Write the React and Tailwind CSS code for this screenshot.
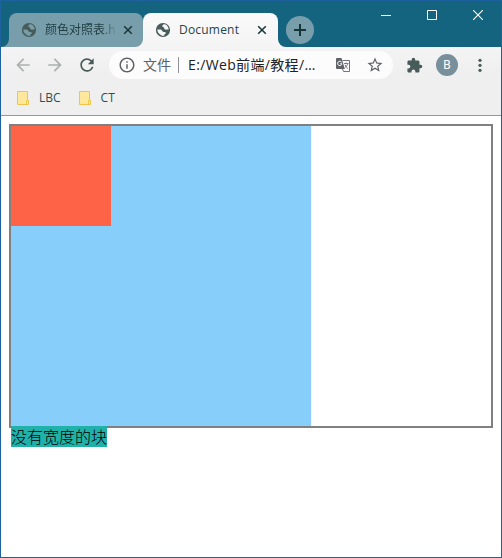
import React from "react";
import { MdArrowBack, MdArrowForward, MdRefresh, MdInfoOutline, MdStarBorder, MdExtension } from "react-icons/md";

function Globe() {
  return (
    <svg viewBox="0 0 16 16" className="h-4 w-4 shrink-0">
      <circle cx="8" cy="8" r="7.1" fill="currentColor" />
      <path
        d="M9.6 2.2C7.6 2.5 6.9 3.6 7.4 4.4C8 5.2 9.2 5 9.2 6C9.2 7.1 10.3 7.8 11.6 7.6L13.7 7.4C13.6 5.4 12.2 3.3 10.6 2.6ZM2.3 7.6C2.3 10 3.9 12.5 6.6 13.4C7.5 13.7 8.6 13.7 9.4 13.4L9.3 12.4C10.5 12.3 11.1 11.5 10.7 10.6C10.2 9.8 8.8 10.2 8 9.7C7 9 6.7 7.7 5.4 7.6Z"
        className="fill-(--land)"
      />
    </svg>
  );
}

function Cross() {
  return (
    <svg viewBox="0 0 10 10" className="h-[10px] w-[10px] shrink-0 text-[#1d3a3a]">
      <path d="M1.2 1.2 8.8 8.8 M8.8 1.2 1.2 8.8" stroke="currentColor" strokeWidth="1.6" fill="none" />
    </svg>
  );
}

function TranslateIcon() {
  return (
    <svg viewBox="0 0 16 16" className="h-4 w-4 shrink-0">
      <path d="M7.5 3.5H14.5V14.5H8.5L7 11" fill="none" stroke="#717478" />
      <path d="M2 1H6.5L9.8 12H2A1 1 0 0 1 1 11V2A1 1 0 0 1 2 1Z" fill="#5f6368" />
      <path d="M6.6 5.1A2.2 2.2 0 1 0 7 6.8H5" fill="none" stroke="#fcfcfc" strokeWidth="1" />
      <path d="M9 6.5H13.5M11.2 5.5V6.5M12.7 6.5C12.3 8.5 11.2 9.8 9.8 10.7M10 7.8C10.7 9.5 11.8 10.8 13 11.7" fill="none" stroke="#717478" strokeWidth=".9" />
    </svg>
  );
}

function TabStrip() {
  return (
    <header className="flex h-[45px] shrink-0 items-start bg-[#14647f]">
      <div className="flex h-full items-end">
        <svg viewBox="0 0 8 8" className="h-2 w-2"><path d="M8 0A8 8 0 0 1 0 8H8Z" fill="#789eab" /></svg>
        <div className="flex h-[34px] w-[134px] bg-[#f4f4f4]">
          <div className="flex w-full items-center rounded-t-lg rounded-br-lg bg-[#789eab] pl-3 text-[#475b58] [--land:#789eab] shadow-[0_-10px_0_0_#14647f]">
            <Globe />
            <span className="ml-2 w-[72px] whitespace-nowrap bg-linear-to-r from-[#203e43] from-80% to-[#789eab] bg-clip-text text-[12px] text-transparent">颜色对照表.h</span>
            <span className="ml-[6px] flex"><Cross /></span>
          </div>
        </div>
      </div>
      <div className="flex h-full items-end">
        <div className="flex h-[34px] w-[135px] items-center rounded-t-lg bg-linear-to-b from-[#fafafa] to-[#f4f4f4] pl-3 text-[#475b58] [--land:#f7f7f7]">
          <Globe />
          <span className="ml-2 w-[72px] text-[12px] tracking-[0.2px] text-[#244549]">Document</span>
          <span className="ml-[6px] flex"><Cross /></span>
        </div>
        <svg viewBox="0 0 8 8" className="h-2 w-2"><path d="M0 0A8 8 0 0 0 8 8H0Z" fill="#f4f4f4" /></svg>
      </div>
      <div className="mt-[14px] flex h-7 w-7 items-center justify-center rounded-full bg-[#789eab]">
        <svg viewBox="0 0 12 12" className="h-3 w-3"><path d="M6 0V12M0 6H12" stroke="#173436" strokeWidth="2" /></svg>
      </div>
      <div className="ml-auto mr-[18px] mt-2 flex gap-9">
        <svg viewBox="0 0 10 10" className="h-[10px] w-[10px]"><path d="M0 5.5H10" stroke="white" /></svg>
        <svg viewBox="0 0 10 10" className="h-[10px] w-[10px]"><path d="M.5 .5H9.5V9.5H.5Z" stroke="white" fill="none" /></svg>
        <svg viewBox="0 0 10 10" className="h-[10px] w-[10px]"><path d="M0 0 10 10M10 0 0 10" stroke="white" strokeWidth="1.1" /></svg>
      </div>
    </header>
  );
}

function AddressBar() {
  return (
    <div className="flex h-9 items-center text-[#475b58]">
      <MdArrowBack className="ml-3 h-5 w-5 text-[#aab1af]" />
      <MdArrowForward className="ml-3 h-5 w-5 text-[#aab1af]" />
      <MdRefresh className="ml-3 h-5 w-5" />
      <div className="ml-3 flex h-7 w-[284px] items-center rounded-full bg-[#fcfcfc] pl-[9px] text-[14px] text-[#5f6368]">
        <MdInfoOutline className="h-[18px] w-[18px]" />
        <span className="ml-[7px] w-7 -translate-y-px whitespace-nowrap">文件</span>
        <span className="ml-[7px] h-4 w-px bg-[#909395]" />
        <span className="ml-[9px] w-[134px] -translate-y-px whitespace-nowrap tracking-[0.35px] text-[#202124]">E:/Web前端/教程/…</span>
        <span className="ml-[13px] flex"><TranslateIcon /></span>
        <MdStarBorder className="ml-[15px] h-[18px] w-[18px]" />
      </div>
      <MdExtension className="ml-[13px] h-[17px] w-[17px]" />
      <div className="ml-[13px] flex h-[22px] w-[22px] items-center justify-center rounded-full bg-[#78909c] font-[Roboto] text-[12px] text-white">B</div>
      <svg viewBox="0 0 4 14" className="ml-5 h-[14px] w-1 fill-current">
        <circle cx="2" cy="2.3" r="1.6" />
        <circle cx="2" cy="7.3" r="1.6" />
        <circle cx="2" cy="12.3" r="1.6" />
      </svg>
    </div>
  );
}

function Bookmark({ children }) {
  return (
    <div className="flex items-center text-[12px] text-[#294f57]">
      <svg viewBox="0 0 13 14" className="h-[14px] w-[13px]">
        <path d="M.5 .5H10.5V9.5H11.5V13.5H.5Z" fill="#ffe79b" stroke="#edc64b" />
        <path d="M9.5 13V9.5H11.5V13" fill="#fff0b5" stroke="#edc64b" />
      </svg>
      <span className="ml-[9px]">{children}</span>
    </div>
  );
}

export default function App() {
  return (
    <div className="flex h-[558px] w-[502px] flex-col overflow-hidden border border-[#1d619e] bg-white font-['Open_Sans','Noto_Sans_CJK_SC',sans-serif]">
      <div className="h-px shrink-0 bg-[#175f8c]" />
      <TabStrip />
      <div className="h-[69px] shrink-0 border-b border-[#98989a] bg-linear-to-b from-[#f4f4f4] to-[#efefef] to-40%">
        <AddressBar />
        <nav className="flex h-[29px] items-center gap-[18px] pl-4">
          <Bookmark>LBC</Bookmark>
          <Bookmark>CT</Bookmark>
        </nav>
      </div>
      <main className="p-2">
        <section className="border-2 border-[#808080]">
          <div className="h-[300px] w-[300px] bg-[#87cefa]">
            <div className="h-[100px] w-[100px] bg-[#ff6347]" />
          </div>
        </section>
        <div className="relative ml-[2px] -mt-[2px] h-[21px] w-24 whitespace-nowrap bg-[#20b2aa] font-['Noto_Sans_CJK_SC',sans-serif] text-[16px] font-light leading-5 text-black">没有宽度的块</div>
      </main>
    </div>
  );
}
